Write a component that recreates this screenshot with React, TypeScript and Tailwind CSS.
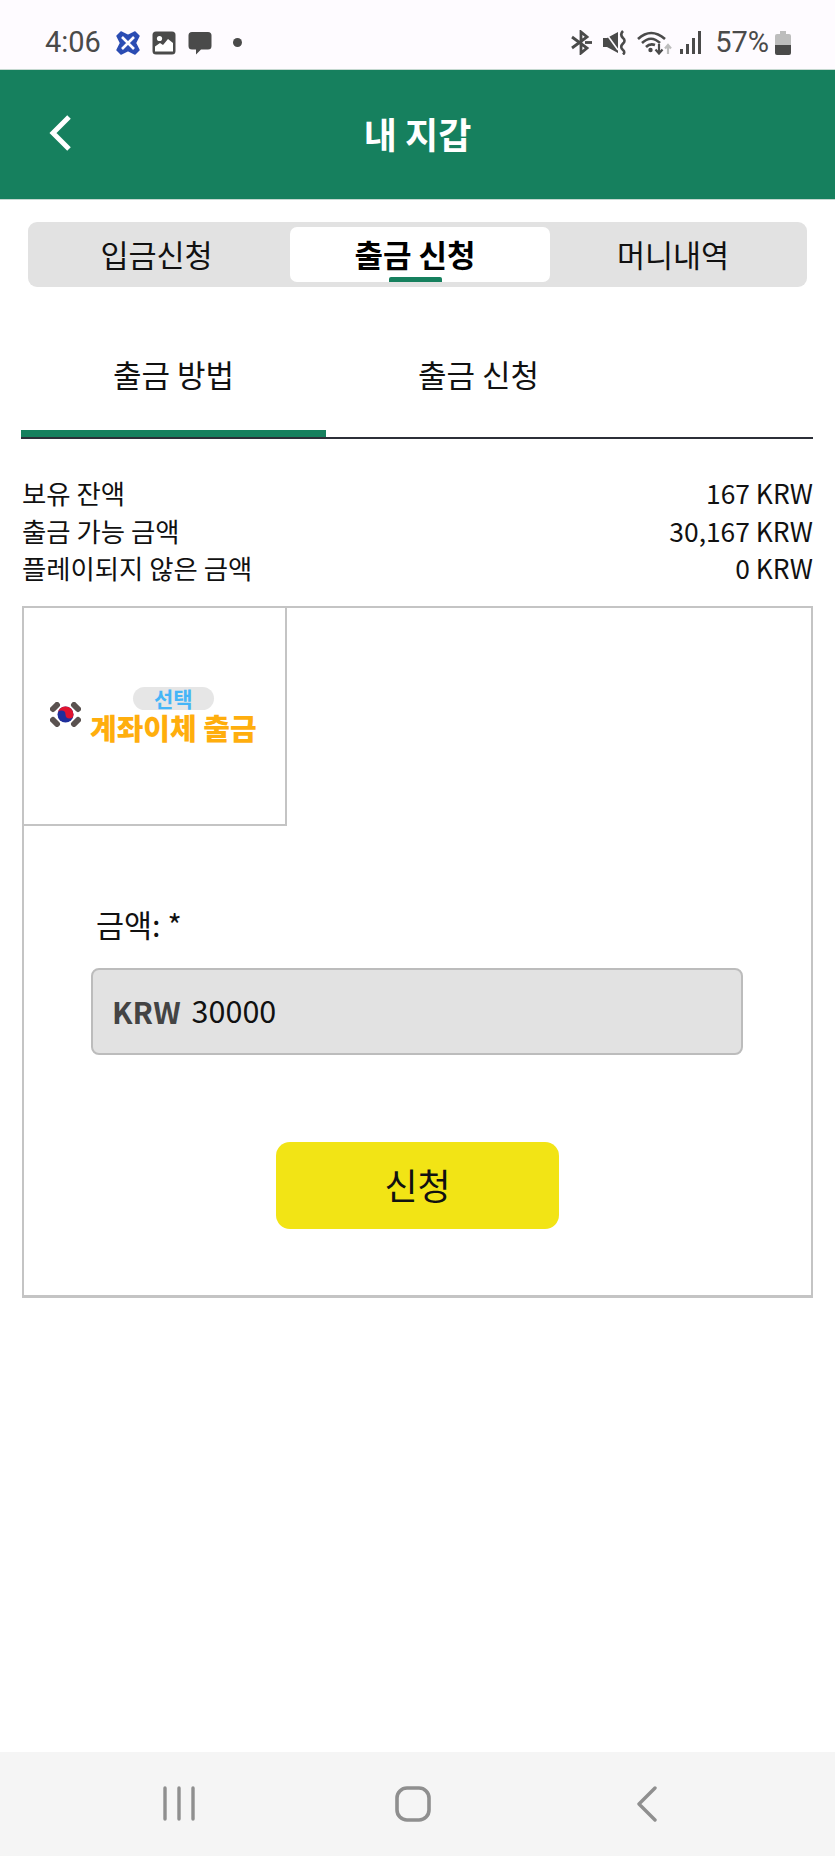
const FONT = "font-['Noto_Sans_CJK_KR','Noto_Sans',sans-serif]"

const balanceRows = [
  { label: '보유 잔액', value: '167 KRW' },
  { label: '출금 가능 금액', value: '30,167 KRW' },
  { label: '플레이되지 않은 금액', value: '0 KRW' },
]

function StatusBar() {
  return (
    <div className="flex h-[69px] shrink-0 items-center justify-between bg-[#fefbff] pl-[45px] pr-[44px] pt-[16px] text-[#4a4a4a]">
      <div className="flex items-center">
        <span className="w-[57px] font-['Roboto',sans-serif] text-[29px] leading-none">4:06</span>
        <svg className="ml-[14px]" width="24" height="24" viewBox="0 0 24 24">
          <path d="M5 1 L12 4.5 L19 1 L23 5 L19.5 12 L23 19 L19 23 L12 19.5 L5 23 L1 19 L4.5 12 L1 5 Z" fill="#2b4cb3" stroke="#2b4cb3" strokeLinejoin="round" strokeWidth="1.5" />
          <path d="M6 6 L18 18 M18 6 L6 18" stroke="#fefbff" strokeWidth="2.6" />
        </svg>
        <svg className="ml-[12px]" width="24" height="24" viewBox="0 0 24 24">
          <rect x="0.5" y="0.5" width="23" height="23" rx="3.5" fill="#4a4a4a" />
          <circle cx="7.5" cy="7.5" r="2.6" fill="#fff" />
          <path d="M3 18 L3 15.5 L8 12 L11 14 L16 8 L21 12 L21 20.5 L3 20.5 Z" fill="#fff" />
        </svg>
        <svg className="ml-[12px]" width="24" height="24" viewBox="0 0 24 24">
          <path d="M4 1 H20 a3.5 3.5 0 0 1 3.5 3.5 V15 a3.5 3.5 0 0 1 -3.5 3.5 H13 L8 23.5 V18.5 H4 a3.5 3.5 0 0 1 -3.5 -3.5 V4.5 A3.5 3.5 0 0 1 4 1 Z" fill="#4a4a4a" />
        </svg>
        <span className="ml-[21px] h-[9px] w-[9px] rounded-full bg-[#4a4a4a]" />
      </div>
      <div className="flex items-center">
        <svg width="21" height="25" viewBox="0 0 21 25" fill="none" stroke="#4a4a4a" strokeWidth="2.8">
          <path d="M1 7 L16 18 L10 23 V2 L16 7 L1 18" />
          <path d="M14 12.5 H21" />
        </svg>
        <svg className="ml-[11px]" width="24" height="25" viewBox="0 0 24 25">
          <path d="M0 8 H4 L15 2 V23 L4 17 H0 Z" fill="#4a4a4a" />
          <path d="M2 2 L15 20" stroke="#fefbff" strokeWidth="1.6" />
          <path d="M20 1 Q16.5 4.5 20 8 Q23 10.5 20 13.5 Q16.5 17 20 20 Q22.5 22 20 24.5" fill="none" stroke="#4a4a4a" strokeWidth="2.6" />
        </svg>
        <svg className="ml-[10px]" width="35" height="25" viewBox="0 0 35 25" fill="none">
          <path d="M1 9 Q14 -3 28 9" stroke="#4a4a4a" strokeWidth="2.6" />
          <path d="M5 13 Q14 4.5 23 13" stroke="#4a4a4a" strokeWidth="2.6" />
          <path d="M9 17 Q13 13 18 15" stroke="#4a4a4a" strokeWidth="2.6" />
          <circle cx="13.5" cy="20" r="2.2" fill="#4a4a4a" />
          <path d="M22 14 V23 M18.5 19.5 L22 23.5 L25.5 19.5" stroke="#4a4a4a" strokeWidth="2.2" />
          <path d="M31 24 V15 M28 18.5 L31 15 L34 18.5" stroke="#bdbdbd" strokeWidth="2.2" />
        </svg>
        <svg className="ml-[8px]" width="21" height="23" viewBox="0 0 21 23" fill="#4a4a4a">
          <rect x="0" y="18" width="3" height="5" />
          <rect x="6" y="13" width="3" height="10" />
          <rect x="12" y="7" width="3" height="16" />
          <rect x="18" y="0" width="3" height="23" />
        </svg>
        <span className="ml-[14px] font-['Roboto',sans-serif] text-[29px] leading-none">57%</span>
        <svg className="ml-[6px]" width="16" height="24" viewBox="0 0 16 24">
          <path d="M5 0 H11 V3 H14 a2 2 0 0 1 2 2 V14 H0 V5 a2 2 0 0 1 2 -2 H5 Z" fill="#bdbdbd" />
          <path d="M0 14 H16 V22 a2 2 0 0 1 -2 2 H2 a2 2 0 0 1 -2 -2 Z" fill="#4a4a4a" />
        </svg>
      </div>
    </div>
  )
}

function Header() {
  return (
    <div className="relative flex h-[131px] shrink-0 items-center justify-center border-y border-y-[#c4d8d0] bg-[#16805e] pb-[4px]">
      <svg className="absolute left-[48px] top-[45px]" width="24" height="36" viewBox="0 0 24 36" fill="none" stroke="#fff" strokeWidth="5">
        <path d="M21 2 L5 18 L21 34" />
      </svg>
      <h1 className="text-[36px] font-bold leading-none text-white">내 지갑</h1>
    </div>
  )
}

function TabBar() {
  return (
    <div className="mx-[28px] mt-[22px] flex h-[65px] rounded-[9px] bg-[#e2e2e2] p-[5px] text-[30.5px] text-[#111]">
      <div className="flex w-[257px] items-center justify-center pr-[10px]">입금신청</div>
      <div className="relative flex w-[260px] items-center justify-center rounded-[7px] bg-white pr-[10px] text-[31px] font-bold text-black">
        출금 신청
        <span className="absolute bottom-0 left-[99px] h-[5px] w-[53px] rounded-t-[2px] bg-[#16805e]" />
      </div>
      <div className="flex flex-1 items-center justify-center pr-[6px]">머니내역</div>
    </div>
  )
}

function SubTabs() {
  return (
    <div className="ml-[21px] mr-[22px] mt-[36px] flex h-[116px] border-b-2 border-[#2c2f38] text-[31px] text-[#111]">
      <div className="flex h-full w-[305px] items-start justify-center border-b-[7px] border-[#16805e] pt-[29px] leading-[44px]">출금 방법</div>
      <div className="flex h-full w-[305px] items-start justify-center pt-[29px] leading-[44px]">출금 신청</div>
    </div>
  )
}

function FlagIcon() {
  return (
    <svg width="31" height="25" viewBox="0 0 31 25">
      <path d="M3 7 L7 3 M24 3 L28 7 M3 18 L7 22 M24 22 L28 18" stroke="#5a5250" strokeWidth="6" strokeLinecap="round" />
      <circle cx="15.5" cy="12.5" r="8" fill="#1f2f9c" />
      <path d="M7.5 12.5 a8 8 0 0 1 16 0 a4 4 0 0 1 -8 0 a4 4 0 0 0 -8 0 Z" fill="#e0122f" />
    </svg>
  )
}

function WithdrawForm() {
  return (
    <div className="ml-[22px] mr-[22px] mt-[19px] h-[692px] border-2 border-b-[3px] border-[#c4c4c4]">
      <div className="flex h-[218px] w-[263px] items-center border-r-2 border-b-2 border-[#c4c4c4] pl-[26px] pb-[2px]">
        <FlagIcon />
        <div className="ml-[9px] flex flex-col items-center">
          <div className="flex h-[23px] w-[81px] items-center justify-center rounded-full bg-[#e6e6e6] text-[21px] font-bold leading-none text-[#45b5f7]">선택</div>
          <div className="mt-[3px] whitespace-nowrap text-[29px] font-black leading-[29px] text-[#ffae0d]">계좌이체 출금</div>
        </div>
      </div>
      <label className="ml-[72px] mt-[76px] block text-[30.5px] leading-[44px] text-[#111]">금액: *</label>
      <div className="ml-[67px] mr-[68px] mt-[22px] flex h-[87px] items-center rounded-[8px] border-2 border-[#bcbcbc] bg-[#e2e2e2] px-[19px] text-[30px] text-[#111]">
        <span className="font-bold text-[#444]">KRW</span>
        <span className="ml-[11px] text-[30.5px]">30000</span>
      </div>
      <div className="mt-[87px] flex justify-center">
        <button type="button" className="h-[87px] w-[283px] rounded-[14px] bg-[#f2e415] pb-[3px] text-[36px] text-[#111]">신청</button>
      </div>
    </div>
  )
}

function NavBar() {
  return (
    <div className="mt-auto flex h-[104px] shrink-0 items-start bg-[#f5f5f5] pt-[34px]">
      <svg className="ml-[163px]" width="32" height="35" viewBox="0 0 32 35" stroke="#8f8f8f" strokeWidth="3.4" strokeLinecap="round">
        <path d="M2 2 V33 M16 2 V33 M30 2 V33" />
      </svg>
      <svg className="ml-[200px]" width="36" height="36" viewBox="0 0 36 36" fill="none" stroke="#8f8f8f" strokeWidth="3.6">
        <rect x="2" y="2" width="32" height="32" rx="10" />
      </svg>
      <svg className="ml-[205px]" width="22" height="36" viewBox="0 0 22 36" fill="none" stroke="#8f8f8f" strokeWidth="3.4" strokeLinecap="round" strokeLinejoin="round">
        <path d="M19 2 L3 18 L19 34" />
      </svg>
    </div>
  )
}

export default function App() {
  return (
    <div className={`flex h-[1856px] w-[835px] flex-col overflow-hidden bg-white ${FONT}`}>
      <StatusBar />
      <Header />
      <TabBar />
      <SubTabs />
      <div className="ml-[22px] mr-[22px] mt-[35px] text-[26.4px] leading-[37.5px] text-[#111]">
        {balanceRows.map((row) => (
          <div key={row.label} className="flex justify-between">
            <span>{row.label}</span>
            <span>{row.value}</span>
          </div>
        ))}
      </div>
      <WithdrawForm />
      <NavBar />
    </div>
  )
}
